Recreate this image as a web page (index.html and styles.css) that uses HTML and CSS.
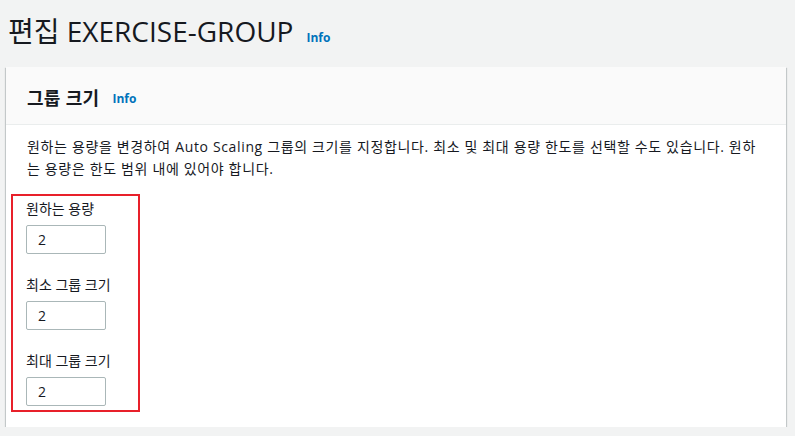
FILE: index.html
```html
<!DOCTYPE html>
<html lang="ko">
<head>
<meta charset="utf-8">
<link rel="stylesheet" href="styles.css">
</head>
<body>
<div class="page">
  <h1 class="title">편집 EXERCISE-GROUP <a class="info info-title" href="#">Info</a></h1>
  <section class="card">
    <div class="card-header">
      <h2 class="card-title">그룹 크기</h2>
      <a class="info" href="#">Info</a>
    </div>
    <div class="card-body">
      <p class="desc">원하는 용량을 변경하여 Auto Scaling 그룹의 크기를 지정합니다. 최소 및 최대 용량 한도를 선택할 수도 있습니다. 원하는 용량은 한도 범위 내에 있어야 합니다.</p>
      <div class="highlight">
        <div class="field">
          <label class="label">원하는 용량</label>
          <div class="input">2</div>
        </div>
        <div class="field">
          <label class="label">최소 그룹 크기</label>
          <div class="input">2</div>
        </div>
        <div class="field">
          <label class="label">최대 그룹 크기</label>
          <div class="input">2</div>
        </div>
      </div>
    </div>
  </section>
</div>
</body>
</html>
```
FILE: styles.css
```css
html, body {
  margin: 0;
  padding: 0;
  background: #f2f3f3;
}
body {
  font-family: "Open Sans", "Noto Sans CJK KR", sans-serif;
  color: #16191f;
}
.page {
  padding: 0 9px 0 5px;
}
.title {
  margin: 0;
  padding: 12px 0 0 3px;
  height: 55px;
  box-sizing: border-box;
  font-size: 28px;
  font-weight: 400;
  line-height: 38px;
  display: flex;
  align-items: baseline;
}
.info {
  color: #0073bb;
  font-size: 12px;
  font-weight: 700;
  text-decoration: none;
  font-family: "Open Sans", sans-serif;
  letter-spacing: 0;
}
.info-title {
  margin-left: 13px;
}
.card {
  background: #fff;
  box-shadow: 0 1px 1px 0 rgba(0,28,36,.3), 1px 1px 1px 0 rgba(0,28,36,.15), -1px 1px 1px 0 rgba(0,28,36,.15);
  margin-top: 12px;
  margin-left: 1px;
}
.card-header {
  background: #fafafa;
  height: 58px;
  box-sizing: border-box;
  border-bottom: 1px solid #eaeded;
  padding: 2px 21px 0 21px;
  display: flex;
  align-items: center;
  gap: 13px;
}
.card-title {
  margin: 0;
  font-size: 18px;
  font-weight: 700;
  letter-spacing: 0.3px;
}
.card-header .info {
  margin-top: 4px;
}
.card-body {
  padding: 11px 21px 15px 21px;
}
.desc {
  margin: 0;
  font-size: 14px;
  line-height: 22px;
  letter-spacing: 0.65px;
  word-break: break-all;
}
.highlight {
  margin: 14px 0 0 -16px;
  width: 129px;
  box-sizing: border-box;
  border: 2px solid #e8202a;
  padding: 2px 0 4px 13px;
  display: flex;
  flex-direction: column;
  gap: 20px;
}
.field {
  display: flex;
  flex-direction: column;
  gap: 5px;
}
.label {
  font-size: 14px;
  line-height: 22px;
}
.input {
  width: 80px;
  height: 29px;
  box-sizing: border-box;
  border: 1px solid #aab7b8;
  border-radius: 2px;
  font-size: 14px;
  line-height: 27px;
  padding-left: 11px;
}
```
